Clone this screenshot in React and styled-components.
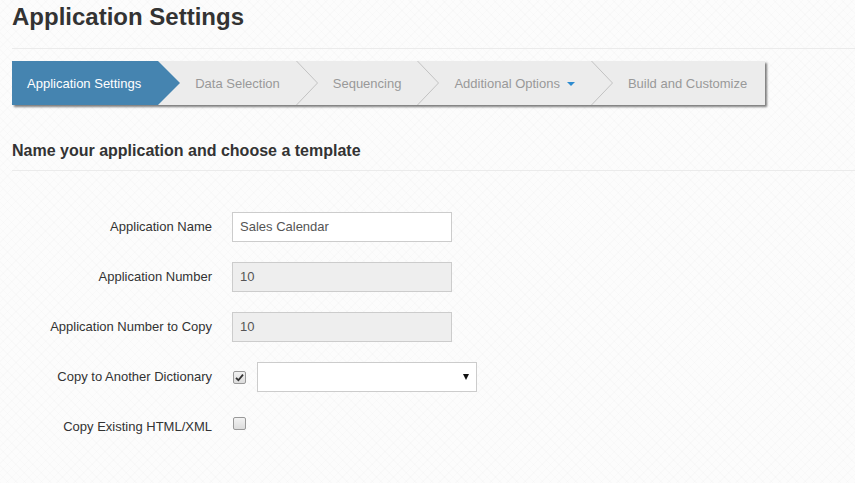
import React from 'react'
import styled, { createGlobalStyle } from 'styled-components'

const GlobalStyle = createGlobalStyle`
  html, body {
    margin: 0;
    padding: 0;
  }
  body {
    font-family: "Liberation Sans", Arial, sans-serif;
    color: #333;
    background-color: #fcfcfc;
    background-image:
      repeating-linear-gradient(45deg, rgba(0,0,0,0.012) 0 1px, transparent 1px 6px),
      repeating-linear-gradient(-45deg, rgba(0,0,0,0.012) 0 1px, transparent 1px 6px);
    min-height: 483px;
  }
`

const Page = styled.div`
  padding: 4px 0 40px 12px;
`

const Title = styled.h1`
  margin: 0;
  font-size: 24px;
  line-height: 26px;
  font-weight: bold;
  color: #333;
`

const Rule = styled.div`
  height: 1px;
  background: #ebebeb;
  margin: ${p => p.$top}px 0 0 0;
`

const Wizard = styled.div`
  display: flex;
  align-items: stretch;
  width: 753px;
  height: 44px;
  margin-top: 12px;
  background: #ececec;
  box-shadow: 2px 2px 2px rgba(0, 0, 0, 0.5);
`

const Step = styled.div`
  display: flex;
  align-items: center;
  padding: 0 ${p => (p.$last ? 18 : p.$first ? 17 : 16)}px 0 15px;
  font-size: 13px;
  white-space: nowrap;
  color: ${p => (p.$active ? '#fff' : '#999')};
  background: ${p => (p.$active ? '#4584b0' : 'transparent')};
`

const Caret = styled.span`
  display: inline-block;
  margin-left: 7px;
  margin-top: 1px;
  border-left: 4px solid transparent;
  border-right: 4px solid transparent;
  border-top: 4px solid #2d8bd0;
`

const SepSvg = styled.svg`
  display: block;
  flex: none;
`

const Separator = ({ active }) => (
  <SepSvg width="22" height="44" viewBox="0 0 22 44">
    {active ? (
      <polygon points="0,0 22,22 0,44" fill="#4584b0" />
    ) : (
      <polyline points="0.5,0 21.5,22 0.5,44" fill="none" stroke="#c2c2c2" strokeWidth="1" />
    )}
  </SepSvg>
)

const Section = styled.h2`
  margin: 37px 0 0 0;
  font-size: 16px;
  line-height: 18px;
  font-weight: bold;
  color: #333;
`

const Form = styled.div`
  display: flex;
  flex-direction: column;
  gap: 20px;
  margin-top: 41px;
`

const Row = styled.div`
  display: flex;
  align-items: ${p => (p.$top ? 'flex-start' : 'center')};
  height: 30px;
`

const Label = styled.label`
  width: 200px;
  flex: none;
  text-align: right;
  font-size: 13px;
  line-height: 30px;
  color: #333;
  margin-right: 20px;
`

const Input = styled.div`
  box-sizing: border-box;
  width: 220px;
  height: 30px;
  padding: 0 7px;
  border: 1px solid #ccc;
  background: ${p => (p.$disabled ? '#eee' : '#fff')};
  font-size: 13px;
  line-height: 28px;
  color: #555;
`

const Select = styled.div`
  box-sizing: border-box;
  display: flex;
  align-items: center;
  justify-content: flex-end;
  width: 220px;
  height: 30px;
  padding-right: 7px;
  margin-left: 11px;
  border: 1px solid #ccc;
  background: #fff;
`

const SelectArrow = styled.span`
  border-left: 3.5px solid transparent;
  border-right: 3.5px solid transparent;
  border-top: 6px solid #111;
`

const Check = styled.span`
  box-sizing: border-box;
  display: flex;
  align-items: center;
  justify-content: center;
  width: 13px;
  height: 13px;
  margin-left: 1px;
  margin-top: ${p => (p.$offset ? 5 : 0)}px;
  border: 1px solid #999;
  border-radius: 2px;
  background: linear-gradient(#f2f2f2, #dcdcdc);
`

const Checkbox = ({ checked, offset }) => (
  <Check $offset={offset}>
    {checked && (
      <svg width="9" height="9" viewBox="0 0 9 9">
        <path d="M1 4.8 L3.4 7.2 L8 1.6" fill="none" stroke="#333" strokeWidth="1.8" />
      </svg>
    )}
  </Check>
)

const steps = [
  { label: 'Application Settings', active: true },
  { label: 'Data Selection' },
  { label: 'Sequencing' },
  { label: 'Additional Options', caret: true },
  { label: 'Build and Customize' },
]

export default function App() {
  return (
    <Page>
      <GlobalStyle />
      <Title>Application Settings</Title>
      <Rule $top={18} />
      <Wizard>
        {steps.map((s, i) => (
          <React.Fragment key={s.label}>
            <Step $active={s.active} $first={i === 0} $last={i === steps.length - 1}>
              {s.label}
              {s.caret && <Caret />}
            </Step>
            {i < steps.length - 1 && <Separator active={s.active} />}
          </React.Fragment>
        ))}
      </Wizard>
      <Section>Name your application and choose a template</Section>
      <Rule $top={10} />
      <Form>
        <Row>
          <Label>Application Name</Label>
          <Input>Sales Calendar</Input>
        </Row>
        <Row>
          <Label>Application Number</Label>
          <Input $disabled>10</Input>
        </Row>
        <Row>
          <Label>Application Number to Copy</Label>
          <Input $disabled>10</Input>
        </Row>
        <Row>
          <Label>Copy to Another Dictionary</Label>
          <Checkbox checked />
          <Select>
            <SelectArrow />
          </Select>
        </Row>
        <Row $top>
          <Label>Copy Existing HTML/XML</Label>
          <Checkbox offset />
        </Row>
      </Form>
    </Page>
  )
}
